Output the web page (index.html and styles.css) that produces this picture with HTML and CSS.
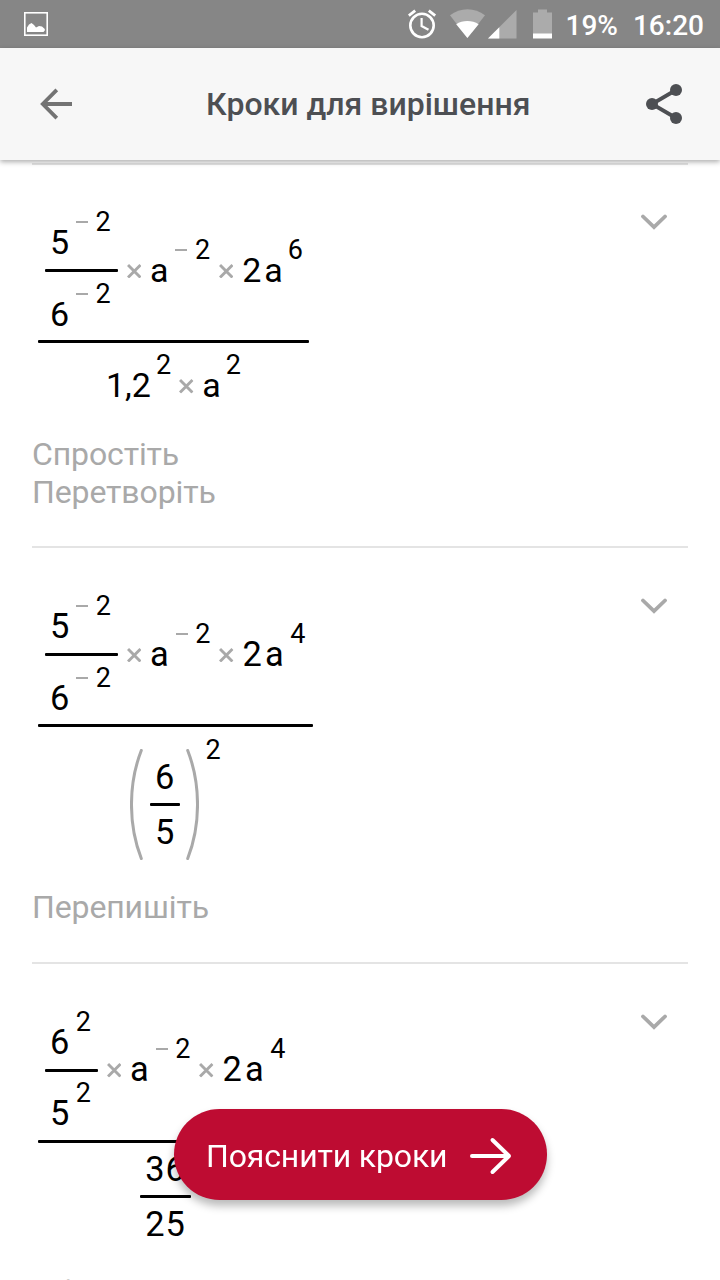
FILE: index.html
```html
<!DOCTYPE html>
<html lang="uk">
<head>
    <meta charset="UTF-8">
    <meta name="viewport" content="width=device-width, initial-scale=1.0">
    <title>Кроки для вирішення</title>
    <link rel="stylesheet" href="styles.css">
</head>
<body>

<!-- Reusable shapes -->
<svg class="defs" width="0" height="0">
    <symbol id="times" viewBox="0 0 14 14"><path d="M1 1 13 13M13 1 1 13" fill="none" stroke="#a9a9a9" stroke-width="2.8"/></symbol>
    <symbol id="chevron" viewBox="0 0 26 16"><path d="M2 2.5 13 13 24 2.5" fill="none" stroke="#a9a9a9" stroke-width="3.8" stroke-linecap="round"/></symbol>
</svg>

<div class="status-bar">
    <svg class="picture-icon" width="24" height="24" viewBox="0 0 24 24">
        <rect x="0.8" y="0.8" width="22.4" height="22.4" fill="none" stroke="#fff" stroke-width="1.6"/>
        <path d="M3 20V15.5L5 12.5 7.5 11 10 13 12 15.5 15 14 18 14.5 20.8 17V18.5L19.5 20Z" fill="#fff"/>
    </svg>
    <div class="status-right">
        <svg width="30" height="32" viewBox="0 0 30 32">
            <circle cx="14" cy="17.5" r="11.7" fill="none" stroke="#fff" stroke-width="2.6"/>
            <path d="M13.6 10V18L20.5 21.8" fill="none" stroke="#fff" stroke-width="2.2"/>
            <path d="M.8 7.6 7.2 2.6M20.8 2.6 27.2 7.6" stroke="#fff" stroke-width="2.8"/>
        </svg>
        <svg class="wifi-icon" width="36" height="30" viewBox="0 0 36 30">
            <path d="M0 6.2C10-1.8 25-1.8 35 6.2L17.4 29Z" fill="#ababab"/>
            <path d="M6.2 15.2C12.5 10.8 22.3 10.8 28.6 15.2L17.4 29Z" fill="#fff"/>
        </svg>
        <svg class="signal-icon" width="29" height="30" viewBox="0 0 29 30">
            <path d="M0 29.5 28.5 1V29.5Z" fill="#ababab"/>
            <path d="M0 29.5 11.3 18.2V29.5Z" fill="#fff"/>
        </svg>
        <svg class="battery-icon" width="19" height="30" viewBox="0 0 19 30">
            <path d="M0 3.5H5V.5H14V3.5H19V25H0Z" fill="#ababab"/>
            <path d="M0 24.5H19V29.5H0Z" fill="#fff"/>
        </svg>
        <span class="percent">19%</span>
        <span class="clock">16:20</span>
    </div>
</div>

<header class="app-bar">
    <svg width="32" height="32" viewBox="0 0 32 32">
        <path d="M16.8 1.8 2.8 16 16.8 30.2M2.8 16H32" fill="none" stroke="#737373" stroke-width="3.8"/>
    </svg>
    <h1>Кроки для вирішення</h1>
    <svg class="share-icon" width="36" height="40" viewBox="0 0 36 40">
        <path d="M30 6 6 20 30 34" fill="none" stroke="#4d4f53" stroke-width="3.8"/>
        <circle cx="30" cy="6" r="6" fill="#4d4f53"/>
        <circle cx="6" cy="20" r="6" fill="#4d4f53"/>
        <circle cx="30" cy="34" r="6" fill="#4d4f53"/>
    </svg>
</header>

<main class="steps">
    <section class="step step-first">
        <div class="step-row">
            <div class="equation equation-first">
                <div class="numerator">
                    <div class="fraction">
                        <div class="power"><span>5</span><i class="minus"></i><sup>2</sup></div>
                        <div class="bar"></div>
                        <div class="power"><span>6</span><i class="minus"></i><sup>2</sup></div>
                    </div>
                    <svg class="times"><use href="#times"/></svg>
                    <div class="power"><span>a</span><i class="minus"></i><sup>2</sup></div>
                    <svg class="times"><use href="#times"/></svg>
                    <div class="power"><span>2</span><span class="variable">a</span><sup>6</sup></div>
                </div>
                <div class="main-bar"></div>
                <div class="denominator">
                    <div class="power"><span>1,2</span><sup>2</sup></div>
                    <svg class="times low"><use href="#times"/></svg>
                    <div class="power"><span>a</span><sup>2</sup></div>
                </div>
            </div>
            <svg class="chevron"><use href="#chevron"/></svg>
        </div>
        <p>Спростіть<br>Перетворіть</p>
    </section>

    <section class="step">
        <div class="step-row">
            <div class="equation">
                <div class="numerator">
                    <div class="fraction">
                        <div class="power"><span>5</span><i class="minus"></i><sup>2</sup></div>
                        <div class="bar"></div>
                        <div class="power"><span>6</span><i class="minus"></i><sup>2</sup></div>
                    </div>
                    <svg class="times"><use href="#times"/></svg>
                    <div class="power"><span>a</span><i class="minus"></i><sup>2</sup></div>
                    <svg class="times"><use href="#times"/></svg>
                    <div class="power"><span>2</span><span class="variable">a</span><sup>4</sup></div>
                </div>
                <div class="main-bar"></div>
                <div class="denominator bracketed">
                    <svg class="paren" viewBox="0 0 13 111"><path d="M11.3 1.5C-1.8 35-1.8 76 11.3 109.5" fill="none" stroke="#a9a9a9" stroke-width="3" stroke-linecap="round"/></svg>
                    <div class="small-fraction single">
                        <span>6</span>
                        <div class="bar"></div>
                        <span>5</span>
                    </div>
                    <svg class="paren" viewBox="0 0 13 111"><path d="M1.7 1.5C14.8 35 14.8 76 1.7 109.5" fill="none" stroke="#a9a9a9" stroke-width="3" stroke-linecap="round"/></svg>
                    <sup>2</sup>
                </div>
            </div>
            <svg class="chevron"><use href="#chevron"/></svg>
        </div>
        <p class="after-bracket">Перепишіть</p>
    </section>

    <section class="step">
        <div class="step-row">
            <div class="equation">
                <div class="numerator">
                    <div class="fraction">
                        <div class="power"><span>6</span><sup>2</sup></div>
                        <div class="bar"></div>
                        <div class="power"><span>5</span><sup>2</sup></div>
                    </div>
                    <svg class="times"><use href="#times"/></svg>
                    <div class="power"><span>a</span><i class="minus"></i><sup>2</sup></div>
                    <svg class="times"><use href="#times"/></svg>
                    <div class="power"><span>2</span><span class="variable">a</span><sup>4</sup></div>
                </div>
                <div class="main-bar"></div>
                <div class="denominator">
                    <div class="small-fraction">
                        <span>36</span>
                        <div class="bar"></div>
                        <span>25</span>
                    </div>
                </div>
            </div>
            <svg class="chevron"><use href="#chevron"/></svg>
        </div>
        <p>Обчисліть</p>
    </section>
</main>

<button class="explain" type="button">
    <span>Пояснити кроки</span>
    <svg width="42" height="38" viewBox="0 0 42 38">
        <path d="M2 19H39M22.5 3 39 19 22.5 35" fill="none" stroke="#fff" stroke-width="4" stroke-linecap="round" stroke-linejoin="round"/>
    </svg>
</button>

</body>
</html>
```
FILE: styles.css
```css
body {
    margin: 0;
    height: 1280px;
    overflow: hidden;
    background: #fff;
    font-family: Roboto, sans-serif;
    color: #000;
}

.defs {
    display: none;
}

svg {
    flex: none;
}

/* Status bar */
.status-bar {
    display: flex;
    justify-content: space-between;
    align-items: center;
    box-sizing: border-box;
    height: 48px;
    padding: 0 16px 0 24px;
    background: #868686;
    color: #fff;
    font-size: 28px;
    font-weight: 500;
}

.status-right {
    display: flex;
    align-items: center;
}

.wifi-icon {
    margin-left: 12px;
}

.signal-icon {
    margin-left: 2px;
}

.battery-icon {
    margin-left: 16px;
}

.percent {
    margin: 2px 0 0 14px;
}

.clock {
    margin: 2px 0 0 15px;
}

/* Header */
.app-bar {
    position: relative;
    z-index: 1;
    display: flex;
    align-items: center;
    box-sizing: border-box;
    height: 112px;
    padding: 0 38px 0 40px;
    background: #f7f7f7;
    box-shadow: 0 2px 5px rgba(0, 0, 0, 0.32);
}

h1 {
    margin: 0 0 0 134px;
    font-size: 32px;
    font-weight: 500;
    color: #4d4f53;
}

.share-icon {
    margin-left: auto;
}

/* Steps */
.steps {
    height: 1120px;
    overflow: hidden;
    padding: 3px 32px 0;
    box-sizing: border-box;
}

.step {
    border-top: 2px solid #e4e4e4;
    padding: 48px 0 35px;
}

.step-first {
    padding-top: 47px;
}

.step-row {
    display: flex;
    justify-content: space-between;
    align-items: flex-start;
    padding: 0 21px 0 6px;
}

.chevron {
    width: 26px;
    height: 16px;
    margin-top: 2px;
}

.step p {
    margin: 39px 0 0;
    font-size: 32px;
    line-height: 37.5px;
    letter-spacing: -0.12px;
    color: #a9a9a9;
}

.step .after-bracket {
    margin-top: 29px;
}

/* Equations */
.equation {
    font-size: 34.4px;
    line-height: 24px;
}

.equation-first {
    font-size: 34px;
}

.numerator {
    display: flex;
    align-items: center;
    padding: 0 7.5px 0 7px;
}

.equation-first .numerator {
    padding-right: 6px;
}

.fraction .power {
    padding: 0 7px 0 5px;
}

.bar,
.main-bar {
    height: 3px;
    background: #000;
    border-radius: 1px;
}

.fraction .bar {
    margin: 15px 0 11.5px;
}

.main-bar {
    margin-top: 14.5px;
}

.power {
    display: flex;
    align-items: flex-start;
}

.power span {
    margin-top: 18px;
}

.numerator > .power,
.times {
    align-self: flex-start;
}

.numerator > .power {
    margin-top: 27.5px;
}

.power .variable {
    margin-left: 3px;
}

.minus {
    width: 12px;
    height: 2px;
    margin: 9px 1px 0 7px;
    background: #a9a9a9;
}

sup {
    margin-left: 6.5px;
    font-size: 27px;
    line-height: 20px;
    vertical-align: baseline;
}

.equation-first span + sup {
    margin-left: 5px;
}

.times {
    width: 14.5px;
    height: 14.5px;
    margin: 51.5px 8.8px 0;
}

.times.low {
    margin: 24px 8.7px 0 8px;
}

.denominator {
    display: flex;
    justify-content: center;
    align-items: flex-start;
    padding-top: 12px;
}

.bracketed {
    padding-top: 13px;
}

.paren {
    width: 13px;
    height: 111px;
    margin-top: 9px;
}

.small-fraction {
    display: flex;
    flex-direction: column;
    align-items: center;
    width: 51px;
    padding-top: 2px;
    letter-spacing: 0.8px;
}

.small-fraction .bar {
    width: 100%;
    margin: 14px 0;
}

.small-fraction.single {
    width: 30px;
    margin: 0 6.5px;
    padding-top: 25px;
    letter-spacing: 0;
}

/* Floating button */
.explain {
    position: fixed;
    left: 174px;
    top: 1109px;
    z-index: 2;
    display: flex;
    justify-content: space-between;
    align-items: center;
    width: 373px;
    height: 91px;
    padding: 2px 35px 0 32px;
    border: none;
    border-radius: 46px;
    background: #be0c32;
    box-shadow: 0 6px 9px rgba(0, 0, 0, 0.27);
    color: #fff;
    font-family: Roboto, sans-serif;
    font-size: 32px;
    letter-spacing: -0.14px;
}
```
